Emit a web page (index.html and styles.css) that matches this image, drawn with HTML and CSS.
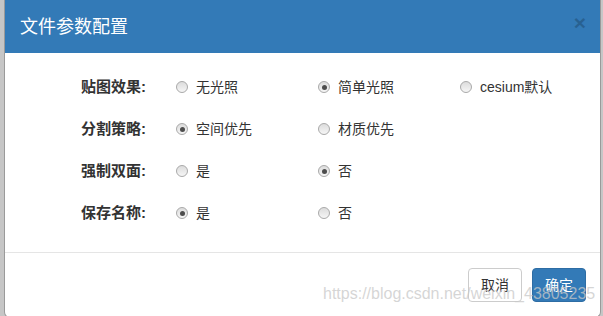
FILE: index.html
```html
<!DOCTYPE html>
<html lang="zh-CN">
<head>
<meta charset="utf-8">
<title>文件参数配置</title>
<link rel="stylesheet" href="styles.css">
</head>
<body>
<div class="modal">
  <div class="modal-header">
    <h4 class="modal-title">文件参数配置</h4>
    <span class="close">×</span>
  </div>
  <div class="modal-body">
    <div class="row">
      <span class="label">贴图效果:</span>
      <label class="opt"><span class="radio"></span>无光照</label>
      <label class="opt"><span class="radio checked"></span>简单光照</label>
      <label class="opt"><span class="radio"></span>cesium默认</label>
    </div>
    <div class="row">
      <span class="label">分割策略:</span>
      <label class="opt"><span class="radio checked"></span>空间优先</label>
      <label class="opt"><span class="radio"></span>材质优先</label>
    </div>
    <div class="row">
      <span class="label">强制双面:</span>
      <label class="opt"><span class="radio"></span>是</label>
      <label class="opt"><span class="radio checked"></span>否</label>
    </div>
    <div class="row">
      <span class="label">保存名称:</span>
      <label class="opt"><span class="radio checked"></span>是</label>
      <label class="opt"><span class="radio"></span>否</label>
    </div>
  </div>
  <div class="modal-footer">
    <button class="btn btn-default">取消</button>
    <button class="btn btn-primary">确定</button>
  </div>
</div>
<div class="watermark">https://blog.csdn.net/weixin_43805235</div>
</body>
</html>
```
FILE: styles.css
```css
html, body {
  margin: 0;
  padding: 0;
}
body {
  width: 603px;
  height: 316px;
  overflow: hidden;
  background: #c6c6c6;
  font-family: "Liberation Sans", "Noto Sans CJK SC", sans-serif;
  color: #333;
  position: relative;
}
.modal {
  margin-left: 4px;
  width: 595px;
  background: #fff;
  border: 1px solid #9a9a9a;
  border-top: 0;
  border-radius: 0 0 6px 6px;
  overflow: hidden;
}
.modal-header {
  height: 53px;
  box-sizing: border-box;
  background: #337ab7;
  display: flex;
  align-items: center;
  padding: 0 14px 0 15px;
}
.modal-title {
  margin: 0;
  font-size: 18px;
  font-weight: normal;
  color: #fff;
  line-height: 25px;
  margin-top: 1px;
}
.close {
  margin-left: auto;
  font-size: 21px;
  font-weight: bold;
  line-height: 1;
  color: #000;
  opacity: 0.2;
  margin-top: -8px;
}
.modal-body {
  padding: 13px 0 18px;
}
.row {
  display: grid;
  grid-template-columns: 171px 142px 142px 1fr;
  height: 42px;
  align-items: center;
}
.label {
  text-align: right;
  padding-right: 30px;
  font-weight: bold;
  font-size: 15px;
  line-height: 20px;
}
.opt {
  display: flex;
  align-items: center;
  gap: 8px;
  font-size: 14px;
  line-height: 20px;
}
.radio {
  box-sizing: border-box;
  width: 12px;
  height: 12px;
  border-radius: 50%;
  border: 1px solid #a9a9a9;
  background: linear-gradient(#dcdcdc, #f6f6f6);
  display: flex;
  align-items: center;
  justify-content: center;
  flex: none;
}
.radio.checked::after {
  content: "";
  width: 5px;
  height: 5px;
  border-radius: 50%;
  background: #4d4d4d;
}
.modal-footer {
  border-top: 1px solid #e5e5e5;
  padding: 15px 14px 15px;
  display: flex;
  justify-content: flex-end;
  gap: 10px;
}
.btn {
  font-family: "Liberation Sans", "Noto Sans CJK SC", sans-serif;
  font-size: 14px;
  line-height: 20px;
  padding: 6px 12px;
  border-radius: 4px;
  border: 1px solid #ccc;
  background: #fff;
  color: #333;
}
.btn-primary {
  background: #337ab7;
  border-color: #2e6da4;
  color: #fff;
}
.watermark {
  position: absolute;
  left: 323px;
  top: 285px;
  font-family: "Liberation Sans", sans-serif;
  font-size: 16px;
  color: rgba(200, 200, 200, 0.75);
  white-space: nowrap;
}
```
